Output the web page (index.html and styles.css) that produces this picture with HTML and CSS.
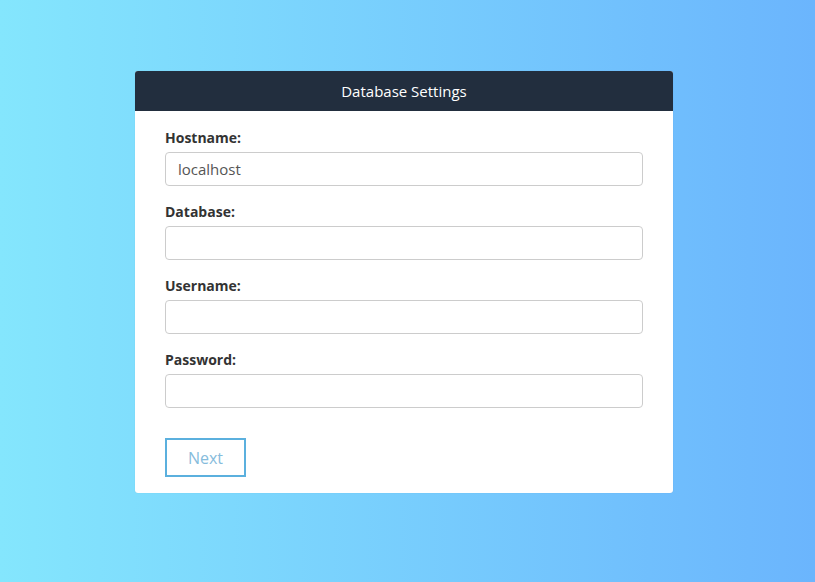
FILE: index.html
```html
<!DOCTYPE html>
<html lang="en">
<head>
    <meta charset="UTF-8">
    <meta name="viewport" content="width=device-width, initial-scale=1.0">
    <title>Database Settings</title>
    <link rel="stylesheet" href="styles.css">
</head>
<body>
    <div class="settings-card">
        <div class="card-header">Database Settings</div>
        <form class="card-body">
            <div class="form-group">
                <label for="hostname">Hostname:</label>
                <input type="text" id="hostname" value="localhost">
            </div>
            <div class="form-group">
                <label for="database">Database:</label>
                <input type="text" id="database">
            </div>
            <div class="form-group">
                <label for="username">Username:</label>
                <input type="text" id="username">
            </div>
            <div class="form-group">
                <label for="password">Password:</label>
                <input type="password" id="password">
            </div>
            <button type="button" class="next-btn">Next</button>
        </form>
    </div>
</body>
</html>
```

FILE: styles.css
```css
html, body {
    margin: 0;
    height: 100%;
}
body {
    font-family: "Open Sans", "Liberation Sans", sans-serif;
    background: linear-gradient(to right, #84e6fd, #6bb5fd);
    padding-top: 71px;
    box-sizing: border-box;
}
.settings-card {
    width: 538px;
    margin-left: 135px;
    background: #fff;
    border-radius: 3px;
    overflow: hidden;
    box-shadow: 0 0 1px rgba(0, 0, 0, 0.15);
}
.card-header {
    height: 40px;
    line-height: 40px;
    background: #222e3e;
    color: #fff;
    text-align: center;
    font-size: 15px;
}
.card-body {
    padding: 17px 30px 16px;
}
.form-group {
    margin-bottom: 16px;
}
.form-group label {
    display: block;
    font-weight: bold;
    font-size: 14px;
    color: #333;
    line-height: 20px;
    margin-bottom: 4px;
}
.form-group input {
    display: block;
    width: 100%;
    height: 34px;
    box-sizing: border-box;
    border: 1px solid #ccc;
    border-radius: 4px;
    padding: 0 12px;
    font-family: inherit;
    font-size: 15px;
    color: #555;
}
.next-btn {
    display: block;
    margin-top: 30px;
    width: 81px;
    height: 39px;
    background: #fff;
    border: 2px solid #5bb0de;
    color: #86bcdc;
    font-family: inherit;
    font-size: 16px;
    cursor: pointer;
}
```
